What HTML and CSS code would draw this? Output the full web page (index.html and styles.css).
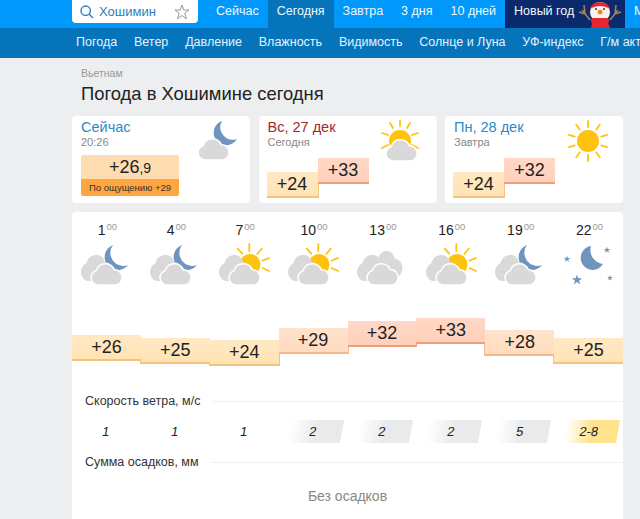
FILE: index.html
```html
<!DOCTYPE html>
<html>
<head>
	<title>Погода в Хошимине сегодня</title>
	<link rel="stylesheet" href="styles.css">
</head>

<body>

<!-- shared icon parts -->
<svg class="defs" width="0" height="0">
	<symbol id="cloud" viewBox="0 0 32 21" overflow="visible" preserveAspectRatio="none">
		<path d="M7 21A7 7 0 0 1 5 7.3 10 10 0 0 1 23.5 6.5 7.3 7.3 0 0 1 25 21Z"/>
	</symbol>
	<symbol id="star" viewBox="-1 -1 2 2">
		<polygon points="0,-1 .22,-.31 .95,-.31 .36,.12 .59,.81 0,.38 -.59,.81 -.36,.12 -.95,-.31 -.22,-.31"/>
	</symbol>
	<g id="two-clouds">
		<use href="#cloud" class="cloud" x="0" y="10" width="33" height="27"/>
		<use href="#cloud" class="cloud front" x="10" y="19" width="32" height="22"/>
	</g>
	<g id="hour-moon">
		<path class="moon" d="M32 1A13 13 0 1 0 47 21 13 13 0 0 1 32 1Z"/>
		<use href="#two-clouds"/>
	</g>
	<g id="hour-sun">
		<circle class="sun" cx="31" cy="20.500" r="10.500"/>
		<g class="rays">
			<line x1="30.300" y1="0" x2="30.300" y2="7"/>
			<line x1="42.700" y1="4.700" x2="38.300" y2="10"/>
			<line x1="50" y1="14" x2="43.600" y2="16.600"/>
			<line x1="50" y1="27" x2="43.600" y2="24"/>
			<line x1="18.700" y1="4.700" x2="23.300" y2="9.700"/>
		</g>
		<use href="#two-clouds"/>
	</g>
</svg>

<div class="top-nav">
	<div class="search">
		<svg class="search-icon" width="14" height="14" viewBox="0 0 14 14"><circle cx="5.700" cy="5.700" r="4.700"/><line x1="9" y1="9" x2="13" y2="13"/></svg>
		<span class="search-text">Хошимин</span>
		<svg class="search-star" width="16" height="16" viewBox="0 0 16 16"><polygon points="8,1 9.800,6 15,6 10.800,9.300 12.400,14.800 8,11.500 3.600,14.800 5.200,9.300 1,6 6.200,6"/></svg>
	</div>
	<a class="tab">Сейчас</a>
	<a class="tab tab-active">Сегодня</a>
	<a class="tab">Завтра</a>
	<a class="tab">3 дня</a>
	<a class="tab">10 дней</a>
	<a class="tab tab-ny">Новый год
		<svg class="snowman" width="48" height="28" viewBox="0 0 48 28">
			<g class="antlers">
				<path d="M14 20 6 10M9 14 3 12M9 14 8 5"/>
				<path d="M34 20 42 10M39 14 45 12M39 14 40 5"/>
			</g>
			<path class="red" d="M15 28 17 20H31L34 28Z"/>
			<circle class="white" cx="24" cy="12" r="10"/>
			<path class="red" d="M14 9C15 0 33 0 34 9 28 5 20 5 14 9Z"/>
			<rect class="red" x="15" y="18" width="18" height="5" rx="2"/>
			<circle class="orange" cx="24" cy="12" r="2.500"/>
			<circle class="dark" cx="20" cy="9" r="1"/>
			<circle class="dark" cx="28" cy="9" r="1"/>
		</svg>
	</a>
	<a class="tab">Месяц</a>
</div>

<div class="sub-nav">
	<a>Погода</a>
	<a>Ветер</a>
	<a>Давление</a>
	<a>Влажность</a>
	<a>Видимость</a>
	<a>Солнце и Луна</a>
	<a>УФ-индекс</a>
	<a>Г/м активность</a>
</div>

<div class="main">
	<div class="crumb">Вьетнам</div>
	<h1 class="title">Погода в Хошимине сегодня</h1>

	<div class="cards">
		<div class="card">
			<div class="card-title">Сейчас</div>
			<div class="card-sub">20:26</div>
			<div class="now">
				<div class="now-temp">+26<small>,9</small></div>
				<div class="now-feel">По ощущению +29</div>
			</div>
			<svg class="card-icon icon-now" width="40" height="42" viewBox="0 0 40 42">
				<path class="moon" d="M24 1A12.500 12.500 0 1 0 39 19 12.500 12.500 0 0 1 24 1Z"/>
				<use href="#cloud" class="cloud front" x="0" y="18" width="32" height="22"/>
			</svg>
		</div>
		<div class="card">
			<div class="card-title card-title-red">Вс, 27 дек</div>
			<div class="card-sub">Сегодня</div>
			<div class="day-temps">
				<div class="day-temp warm edge-r">+24</div>
				<div class="day-temp hot day-high">+33</div>
			</div>
			<svg class="card-icon icon-today" width="40" height="42" viewBox="0 0 40 42">
				<circle class="sun" cx="19" cy="21" r="11"/>
				<g class="rays">
					<line x1="19" y1="0" x2="19" y2="6"/>
					<line x1="9" y1="3" x2="12" y2="8"/>
					<line x1="29" y1="3" x2="26" y2="8"/>
					<line x1="1" y1="13" x2="7" y2="15"/>
					<line x1="37" y1="13" x2="31" y2="15"/>
					<line x1="1" y1="28" x2="7" y2="25"/>
					<line x1="37" y1="28" x2="31" y2="25"/>
				</g>
				<use href="#cloud" class="cloud front" x="5" y="19" width="32" height="22"/>
			</svg>
		</div>
		<div class="card">
			<div class="card-title">Пн, 28 дек</div>
			<div class="card-sub">Завтра</div>
			<div class="day-temps">
				<div class="day-temp warm edge-r">+24</div>
				<div class="day-temp hot day-high">+32</div>
			</div>
			<svg class="card-icon icon-tomorrow" width="40" height="42" viewBox="-20 -21 40 42">
				<circle class="sun" r="11"/>
				<g class="rays">
					<line y1="-20" y2="-14"/>
					<line y1="-20" y2="-14" transform="rotate(36)"/>
					<line y1="-20" y2="-14" transform="rotate(72)"/>
					<line y1="-20" y2="-14" transform="rotate(108)"/>
					<line y1="-20" y2="-14" transform="rotate(144)"/>
					<line y1="-20" y2="-14" transform="rotate(180)"/>
					<line y1="-20" y2="-14" transform="rotate(216)"/>
					<line y1="-20" y2="-14" transform="rotate(252)"/>
					<line y1="-20" y2="-14" transform="rotate(288)"/>
					<line y1="-20" y2="-14" transform="rotate(324)"/>
				</g>
			</svg>
		</div>
	</div>

	<div class="panel">
		<div class="row hours">
			<div class="hour">1<sup>00</sup></div>
			<div class="hour">4<sup>00</sup></div>
			<div class="hour">7<sup>00</sup></div>
			<div class="hour">10<sup>00</sup></div>
			<div class="hour">13<sup>00</sup></div>
			<div class="hour">16<sup>00</sup></div>
			<div class="hour">19<sup>00</sup></div>
			<div class="hour">22<sup>00</sup></div>
		</div>
		<div class="row icons">
			<div class="cell"><svg class="hour-icon" viewBox="0 0 50 44"><use href="#hour-moon"/></svg></div>
			<div class="cell"><svg class="hour-icon" viewBox="0 0 50 44"><use href="#hour-moon"/></svg></div>
			<div class="cell"><svg class="hour-icon" viewBox="0 0 50 44"><use href="#hour-sun"/></svg></div>
			<div class="cell"><svg class="hour-icon" viewBox="0 0 50 44"><use href="#hour-sun"/></svg></div>
			<div class="cell">
				<svg class="hour-icon" viewBox="0 0 50 44">
					<use href="#cloud" class="cloud front" x="15" y="5" width="32" height="29"/>
					<use href="#two-clouds"/>
				</svg>
			</div>
			<div class="cell"><svg class="hour-icon" viewBox="0 0 50 44"><use href="#hour-sun"/></svg></div>
			<div class="cell"><svg class="hour-icon" viewBox="0 0 50 44"><use href="#hour-moon"/></svg></div>
			<div class="cell">
				<svg class="hour-icon" viewBox="0 0 50 44">
					<path class="moon" d="M27 2A12 12 0 1 0 39 20 14 14 0 0 1 27 2Z"/>
					<use href="#star" class="moon" x="-0.500" y="11.500" width="7" height="7"/>
					<use href="#star" class="moon" x="39.500" y="2.500" width="7" height="7"/>
					<use href="#star" class="moon" x="7.500" y="30.500" width="11" height="11"/>
					<use href="#star" class="moon" x="43" y="31" width="6" height="6"/>
				</svg>
			</div>
		</div>
		<div class="row temps">
			<div class="temp warm" style="margin-top: 17px; z-index: 26">+26</div>
			<div class="temp warm edge-l" style="margin-top: 20px; z-index: 25">+25</div>
			<div class="temp warm edge-l edge-r" style="margin-top: 22px; z-index: 24">+24</div>
			<div class="temp warmer edge-r" style="margin-top: 10px; z-index: 29">+29</div>
			<div class="temp hot edge-r" style="margin-top: 3px; z-index: 32">+32</div>
			<div class="temp hot" style="margin-top: 0px; z-index: 33">+33</div>
			<div class="temp warmer edge-l" style="margin-top: 12px; z-index: 28">+28</div>
			<div class="temp warm edge-l" style="margin-top: 20px; z-index: 25">+25</div>
		</div>
		<div class="label">Скорость ветра, м/с</div>
		<div class="row wind">
			<div class="cell"><span class="speed">1</span></div>
			<div class="cell"><span class="speed">1</span></div>
			<div class="cell"><span class="speed">1</span></div>
			<div class="cell"><span class="speed speed-mid">2</span></div>
			<div class="cell"><span class="speed speed-mid">2</span></div>
			<div class="cell"><span class="speed speed-mid">2</span></div>
			<div class="cell"><span class="speed speed-mid">5</span></div>
			<div class="cell"><span class="speed speed-strong">2-8</span></div>
		</div>
		<div class="label">Сумма осадков, мм</div>
		<div class="no-rain">Без осадков</div>
	</div>
</div>

</body>
</html>
```

FILE: styles.css
```css
html, body {margin: 0; padding: 0; height: 519px; overflow: hidden;}
body {font-family: "Liberation Sans", Arial, sans-serif; background: #eceef0; color: #222;}
.defs {position: absolute;}

.top-nav {display: flex; height: 28px; background: #0099fb; padding-left: 72px; white-space: nowrap; font-size: 12.500px; overflow: hidden;}
.search {display: flex; flex: none; align-items: center; width: 126px; height: 23px; background: #fff; border-radius: 0 0 4px 4px; margin-right: 9px; box-sizing: border-box; padding: 0 8px; font-size: 13px;}
.search-icon {flex: none; fill: none; stroke: #2a7fc0; stroke-width: 1.4;}
.search-text {color: #2a7fc0; margin-left: 5px; flex: 1;}
.search-star {flex: none; fill: none; stroke: #999; stroke-width: 1;}
.tab {display: block; color: #eef8ff; padding: 0 9px; line-height: 23px; flex: none;}
.tab-active {background: #0574bb;}
.tab-ny {position: relative; width: 102px; background: #0b2a6b;}
.snowman {position: absolute; right: 1px; top: 0;}
.antlers {fill: none; stroke: #a5835c; stroke-width: 1.500;}
.snowman .red {fill: #e5262f;}
.snowman .white {fill: #f6f3ee;}
.snowman .orange {fill: #f08a2a;}
.snowman .dark {fill: #333;}

.sub-nav {display: flex; gap: 16.800px; height: 30px; line-height: 29px; background: #0574bb; padding-left: 76px; font-size: 12.500px; color: #e6f3fb; white-space: nowrap; overflow: hidden;}

.main {width: 551px; padding: 9px 0 0 72px;}
.crumb {font-size: 10.500px; line-height: 13px; color: #999; padding-left: 9px;}
.title {font-size: 18.400px; font-weight: normal; line-height: 22px; margin: 3px 0 11px; padding-left: 9px; color: #222;}

.cards {display: flex; justify-content: space-between; margin-bottom: 9px;}
.card {position: relative; width: 178px; height: 87px; box-sizing: border-box; padding: 3px 9px 0; background: #fff; border-radius: 4px;}
.card-title {font-size: 14.500px; line-height: 17px; color: #2a8ac9;}
.card-title-red {color: #a5282c;}
.card-sub {font-size: 11px; line-height: 13px; color: #888;}
.card-icon {position: absolute; top: 4px;}
.icon-now {right: 12px;}
.icon-today {right: 16px;}
.icon-tomorrow {right: 15px;}

.now {width: 98px; margin-top: 6px; text-align: center; border-radius: 2px; overflow: hidden;}
.now-temp {background: #ffdcb0; height: 24px; line-height: 25px; font-size: 18px;}
.now-temp small {font-size: 14px;}
.now-feel {background: #ffa640; height: 17px; line-height: 17px; font-size: 9.500px; color: #333;}

.day-temps {display: flex; align-items: flex-start; margin: 9px 0 0 -1px;}
.day-temp {width: 51px; height: 26px; margin-top: 14px; box-sizing: border-box; line-height: 25px; font-size: 18px; text-align: center;}
.day-high {margin-top: 0; z-index: 1;}

.panel {background: #fff; border-radius: 4px; height: 330px;}
.row {display: flex;}
.row > * {flex: 1 1 0; min-width: 0;}
.cell {text-align: center;}

.hours {height: 32px; padding-top: 10px; box-sizing: border-box;}
.hour {font-size: 14px; line-height: 16px; text-align: center; padding-left: 2px;}
.hour sup {font-size: 9.500px; color: #999; line-height: 0; vertical-align: 5px; margin-left: 1px;}
.icons {height: 74px;}
.hour-icon {width: 50px; height: 44px; overflow: visible;}
.cloud {fill: #d9d9d9;}
.cloud.front {stroke: #fff; stroke-width: 1.500px;}
.moon {fill: #6f94bd;}
.sun {fill: #ffc20e;}
.rays {stroke: #ffc20e; stroke-width: 1.800; stroke-linecap: round;}

.temps {height: 74px; align-items: flex-start;}
.temp {height: 26px; box-sizing: border-box; line-height: 25px; font-size: 18px; text-align: center;}
.warm {--edge: #f3c57c; background: linear-gradient(#ffe9c4, #ffe3b4); border-bottom: 2px solid var(--edge);}
.warmer {--edge: #f3b98c; background: linear-gradient(#ffe3cc, #ffdcc0); border-bottom: 2px solid var(--edge);}
.hot {--edge: #ef9f7c; background: linear-gradient(#ffd8c6, #ffd0ba); border-bottom: 2px solid var(--edge);}
.edge-l {box-shadow: -1px 0 0 var(--edge);}
.edge-r {box-shadow: 1px 0 0 var(--edge);}
.edge-l.edge-r {box-shadow: -1px 0 0 var(--edge), 1px 0 0 var(--edge);}

.label {display: flex; align-items: center; gap: 12px; padding-left: 13px; height: 18px; font-size: 12.500px; color: #333;}
.label::after {content: ""; flex: 1; height: 1px; background: #f1f1f1;}

.wind {height: 43px; padding-top: 10px; box-sizing: border-box;}
.speed {display: inline-block; box-sizing: border-box; width: 52px; height: 23px; padding-right: 6px; margin-left: 6px; line-height: 23px; font-size: 13px; color: #222; transform: skewX(-10deg);}
.speed-mid {background: linear-gradient(to right, rgba(232, 234, 236, 0), #e8eaec 50%);}
.speed-strong {background: linear-gradient(to right, rgba(255, 226, 140, 0), #ffe28c 50%);}
.no-rain {margin-top: 16px; text-align: center; font-size: 14px; color: #888; line-height: 18px;}
```
